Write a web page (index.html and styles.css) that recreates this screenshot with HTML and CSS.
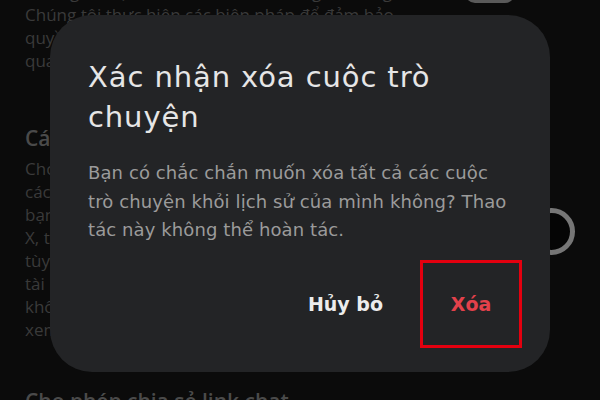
FILE: index.html
```html
<!DOCTYPE html>
<html lang="vi">
<head>
  <meta charset="UTF-8" />
  <meta name="viewport" content="width=device-width, initial-scale=1.0"/>
  <title>Xóa cuộc trò chuyện</title>
  <link rel="stylesheet" href="styles.css">
</head>
<body>
  <!-- Settings page behind the dialog -->
  <div class="settings">
    <div class="row">
      <p class="text">Những dữ liệu của mình cho tất cả người dùng.<br>
        Chúng tôi thực hiện các biện pháp để đảm bảo<br>
        quyền riêng tư và bảo mật cho người dùng khi<br>
        qua dịch vụ của chúng tôi.</p>
      <div class="switch-top"></div>
    </div>

    <h3 class="heading">Các tùy chọn khác</h3>
    <div class="row">
      <p class="text">Cho phép sử dụng các cuộc trò chuyện<br>
        các ứng dụng đã kết nối với tài khoản<br>
        bạn, bao gồm các dịch vụ như Google,<br>
        X, tài khoản và tùy chọn của bạn.<br>
        tùy chọn này có thể thay đổi bất cứ lúc<br>
        tài khoản của bạn. Người khác sẽ<br>
        không thể truy cập hoặc<br>
        xem được nội dung.</p>
      <div class="switch"><span class="knob"></span></div>
    </div>

    <h3 class="heading heading-last">Cho phép chia sẻ link chat</h3>
  </div>

  <!-- Confirm dialog -->
  <div class="overlay">
    <div class="dialog">
      <h2 class="dialog-title">Xác nhận xóa cuộc trò chuyện</h2>
      <p class="dialog-body">Bạn có chắc chắn muốn xóa tất cả các cuộc trò chuyện khỏi lịch sử của mình không? Thao tác này không thể hoàn tác.</p>
      <div class="actions">
        <button class="btn">Hủy bỏ</button>
        <button class="btn btn-danger">Xóa</button>
      </div>
    </div>
  </div>
</body>
</html>
```

FILE: styles.css
```css
* {
  box-sizing: border-box;
}

body {
  margin: 0;
  width: 600px;
  height: 400px;
  overflow: hidden;
  background-color: #0b0b0b;
  font-family: 'DejaVu Sans', 'Noto Sans', sans-serif;
  position: relative;
}

/* page behind */
.settings {
  padding: 0 25px;
  margin-top: -20px;
  color: #3a3a3a;
  font-family: 'Open Sans', 'Noto Sans', sans-serif;
}

.row {
  display: flex;
  align-items: flex-start;
  justify-content: space-between;
}

.text {
  margin: 0;
  font-size: 17px;
  line-height: 23px;
  white-space: nowrap;
}

.switch-top {
  width: 50px;
  height: 20px;
  margin-top: 3px;
  margin-right: 60px;
  border-radius: 10px;
  background-color: #5a5a5a;
}

.heading {
  margin: 53px 0 6px;
  font-size: 21px;
  line-height: 26px;
  font-weight: 600;
  color: #4a4a4a;
}

.heading-last {
  margin-top: 47px;
}

.switch {
  margin-top: 51px;
  width: 56px;
  display: flex;
  justify-content: flex-end;
}

.knob {
  width: 47px;
  height: 47px;
  border-radius: 50%;
  border: 5px solid #767676;
  background-color: #050505;
}

/* dialog */
.overlay {
  position: absolute;
  top: 15px;
  left: 50px;
}

.dialog {
  width: 500px;
  height: 357px;
  background-color: #232426;
  border-radius: 42px;
  padding: 42px 38px 0;
}

.dialog-title {
  margin: 0;
  font-size: 29px;
  font-weight: normal;
  letter-spacing: 0.9px;
  line-height: 40px;
  color: #e6e6e6;
  width: 420px;
}

.dialog-body {
  margin: 22px 0 0;
  font-size: 18px;
  letter-spacing: 0.1px;
  line-height: 28.5px;
  color: #9b9b9b;
}

.actions {
  display: flex;
  justify-content: flex-end;
  margin-top: 15px;
  margin-right: -10px;
}

.btn {
  background: none;
  border: 3px solid transparent;
  font-family: inherit;
  font-size: 19px;
  font-weight: bold;
  color: #ececec;
  padding: 0;
  height: 88px;
  cursor: pointer;
}

.btn:first-child {
  margin-right: 34px;
}

.btn-danger {
  width: 102px;
  color: #e3414b;
  border: 3.5px solid #e4000f;
}
```
